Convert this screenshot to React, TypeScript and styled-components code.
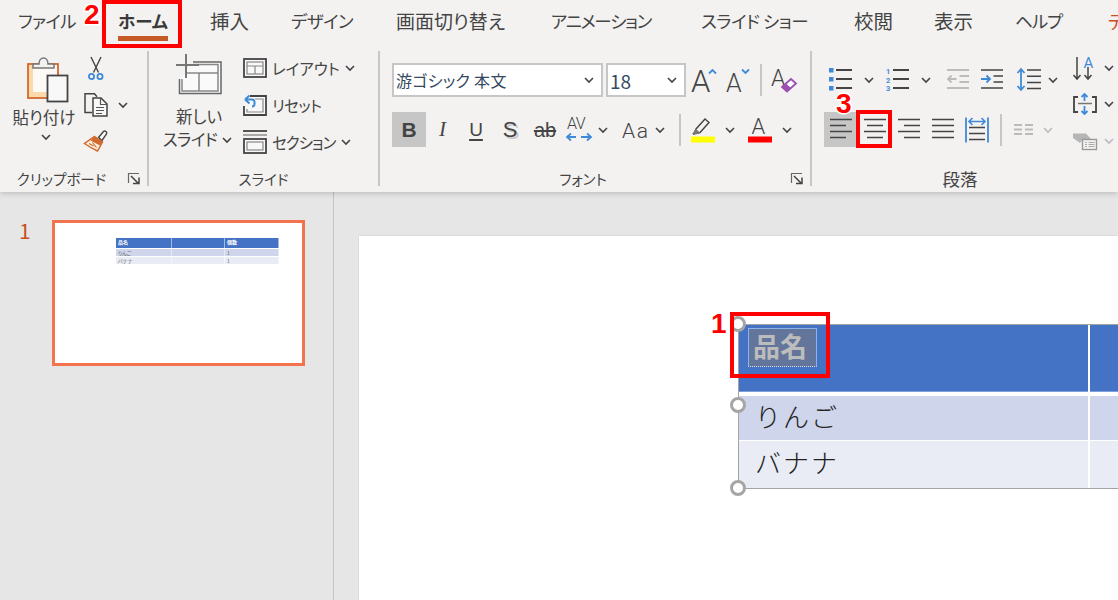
import React from "react";
import styled, { createGlobalStyle } from "styled-components";

const JP = `"Noto Sans CJK JP", "Noto Sans", sans-serif`;
const INK = "#444444";
const BLUE = "#3f8ad8";
const ORANGE = "#d2692f";

const Global = createGlobalStyle`
  html, body { margin: 0; padding: 0; background: #e6e6e6; }
  body { font-family: ${JP}; font-feature-settings: "palt"; overflow: hidden; }
`;

const Page = styled.div`
  position: relative;
  width: 1118px;
  height: 600px;
  overflow: hidden;
  display: flex;
  flex-direction: column;
  color: ${INK};
`;

/* ---------- ribbon ---------- */
const Ribbon = styled.header`
  position: relative;
  z-index: 2;
  flex: none;
  height: 192px;
  background: #f3f2f1;
  box-shadow: 0 2px 5px rgba(0, 0, 0, 0.16);
`;
const TabBar = styled.nav`
  display: flex;
  height: 48px;
  padding-left: 18px;
  white-space: nowrap;
  overflow: hidden;
`;
const Tab = styled.div<{ $w: number; $size?: number; $active?: boolean; $accent?: boolean; $ls?: number }>`
  flex: none;
  width: ${(p) => p.$w}px;
  font-size: ${(p) => p.$size ?? 17.5}px;
  line-height: 24px;
  padding-top: 9px;
  letter-spacing: ${(p) => p.$ls ?? 0}px;
  color: ${(p) => (p.$accent ? "#c8501e" : p.$active ? "#3a3a3a" : INK)};
  font-weight: ${(p) => (p.$active ? 700 : 400)};
`;
const TabText = styled.span<{ $active?: boolean }>`
  display: inline-block;
  padding-bottom: 3px;
  border-bottom: 5px solid ${(p) => (p.$active ? "#c55a27" : "transparent")};
`;
const Groups = styled.div`
  display: flex;
  height: 144px;
`;
const Group = styled.section<{ $w: number; $pad?: number }>`
  flex: none;
  width: ${(p) => p.$w}px;
  padding-left: ${(p) => p.$pad ?? 0}px;
  box-sizing: border-box;
  display: flex;
  flex-direction: column;
`;
const GroupBody = styled.div`
  flex: 1;
  min-height: 0;
  display: flex;
`;
const GroupFooter = styled.footer<{ $pad?: number; $w?: number }>`
  flex: none;
  height: 24px;
  width: ${(p) => (p.$w ? `${p.$w}px` : "auto")};
  margin: 0 0 1px -${(p) => p.$pad ?? 0}px;
  display: flex;
  align-items: center;
`;
const GroupLabel = styled.div<{ $size?: number }>`
  flex: 1;
  text-align: center;
  font-size: ${(p) => p.$size ?? 14.5}px;
  line-height: 24px;
  color: ${INK};
`;
const Launcher = styled.div`
  flex: none;
  width: 24px;
  display: flex;
  justify-content: flex-start;
  padding-left: 5px;
  box-sizing: border-box;
`;
const Divider = styled.div`
  flex: none;
  width: 2px;
  margin: 3px 0 6px;
  background: #c6c6c6;
`;

/* clipboard */
const PasteButton = styled.div`
  flex: none;
  width: 76px;
  margin-left: 6px;
  display: flex;
  flex-direction: column;
  align-items: center;
  padding-top: 9px;
`;
const PasteGraphic = styled.div`
  margin-left: 7px;
`;
const BigLabel = styled.div<{ $mt?: number; $ml?: number; $ls?: number }>`
  font-size: 16.5px;
  line-height: 23px;
  margin-top: ${(p) => p.$mt ?? 0}px;
  margin-left: ${(p) => p.$ml ?? 0}px;
  letter-spacing: ${(p) => p.$ls ?? 0}px;
  white-space: nowrap;
  display: flex;
  align-items: center;
  gap: 5px;
`;
const ChevronLine = styled.div`
  height: 16px;
  padding-left: 4px;
  display: flex;
  align-items: center;
`;
const ClipTools = styled.div`
  flex: none;
  width: 60px;
  display: flex;
  flex-direction: column;
  padding-top: 8px;
`;
const ClipTool = styled.div<{ $h: number; $pl: number }>`
  height: ${(p) => p.$h}px;
  display: flex;
  align-items: center;
  padding-left: ${(p) => p.$pl}px;
  gap: 10px;
`;

/* slides */
const NewSlide = styled.div`
  flex: none;
  width: 90px;
  display: flex;
  flex-direction: column;
  align-items: center;
  padding-top: 6px;
  margin-left: 5px;
`;
const SlideTools = styled.div`
  flex: none;
  display: flex;
  flex-direction: column;
  padding: 9px 0 0 0;
  margin-left: -1px;
`;
const SlideTool = styled.div<{ $h: number }>`
  height: ${(p) => p.$h}px;
  display: flex;
  align-items: center;
  font-size: 15.5px;
  white-space: nowrap;
`;
const SlideToolIcon = styled.div`
  width: 29px;
  flex: none;
`;
const SlideToolText = styled.span<{ $ls?: number }>`
  letter-spacing: ${(p) => p.$ls ?? 0}px;
`;
const ToolChevron = styled.div<{ $ml: number }>`
  margin-left: ${(p) => p.$ml}px;
  display: flex;
`;

/* font + paragraph */
const Stack = styled.div`
  flex: none;
  display: flex;
  flex-direction: column;
  padding-top: 15px;
  gap: 15px;
`;
const ToolRow = styled.div<{ $h: number }>`
  height: ${(p) => p.$h}px;
  display: flex;
  align-items: stretch;
`;
const Cell = styled.div<{ $w: number; $ml?: number; $on?: boolean }>`
  flex: none;
  width: ${(p) => p.$w}px;
  margin-left: ${(p) => p.$ml ?? 0}px;
  background: ${(p) => (p.$on ? "#c6c6c6" : "transparent")};
  display: flex;
  align-items: center;
  justify-content: center;
`;
const Select = styled.div<{ $w: number; $ml?: number; $size?: number; $ls?: number }>`
  flex: none;
  width: ${(p) => p.$w}px;
  margin-left: ${(p) => p.$ml ?? 0}px;
  box-sizing: border-box;
  background: #fff;
  border: 2px solid #c6c6c6;
  display: flex;
  align-items: center;
  justify-content: space-between;
  padding: 0 7px 0 2px;
  font-size: ${(p) => p.$size ?? 16}px;
  letter-spacing: ${(p) => p.$ls ?? 0}px;
  color: #34495e;
`;
const VRule = styled.div<{ $ml: number; $h: number }>`
  flex: none;
  width: 2px;
  height: ${(p) => p.$h}px;
  align-self: center;
  margin-left: ${(p) => p.$ml}px;
  background: #c6c6c6;
`;
const Glyph = styled.span<{ $size: number; $weight?: number; $serif?: boolean; $italic?: boolean; $under?: boolean; $strike?: boolean; $shadow?: boolean }>`
  font-family: ${(p) => (p.$serif ? `"Liberation Serif", serif` : `"Liberation Sans", sans-serif`)};
  font-size: ${(p) => p.$size}px;
  font-weight: ${(p) => p.$weight ?? 400};
  font-style: ${(p) => (p.$italic ? "italic" : "normal")};
  text-decoration: ${(p) => (p.$under ? "underline" : p.$strike ? "line-through" : "none")};
  text-decoration-thickness: 1.5px;
  text-underline-offset: 3px;
  text-shadow: ${(p) => (p.$shadow ? "2px 2px 0 #c9c9c9" : "none")};
  color: ${INK};
  line-height: 1;
  white-space: nowrap;
`;
const ParaLayout = styled.div`
  flex: 1;
  display: flex;
`;
const ParaSide = styled.div`
  flex: none;
  margin-left: 9px;
  display: flex;
  flex-direction: column;
  padding-top: 3px;
`;
const ParaSideItem = styled.div<{ $h: number }>`
  height: ${(p) => p.$h}px;
  display: flex;
  align-items: center;
  gap: 7px;
`;

/* ---------- work area ---------- */
const Work = styled.main`
  flex: 1;
  min-height: 0;
  display: flex;
  background: #e6e6e6;
`;
const ThumbPane = styled.aside`
  flex: none;
  width: 334px;
  box-sizing: border-box;
  border-right: 1px solid #c4c4c4;
  display: flex;
  padding: 28px 0 0 19px;
`;
const ThumbNumber = styled.div`
  width: 33px;
  font-size: 21px;
  line-height: 20px;
  color: #c8501e;
`;
const Thumb = styled.div`
  width: 253px;
  height: 146px;
  box-sizing: border-box;
  border: 3px solid #f4734f;
  background: #fff;
  padding: 15px 0 0 61px;
`;
const MiniTable = styled.div`
  width: 163px;
  display: grid;
  grid-template-columns: 56px 53px 54px;
  grid-template-rows: 10px 7px 7px;
  row-gap: 1px;
  font-size: 5px;
  line-height: 7px;
`;
const MiniCell = styled.div<{ $row: number }>`
  padding-left: 2px;
  overflow: hidden;
  white-space: nowrap;
  background: ${(p) => (p.$row === 0 ? "#4472c4" : p.$row === 1 ? "#cfd5ea" : "#e9ebf5")};
  color: ${(p) => (p.$row === 0 ? "#fff" : "#666")};
  font-weight: ${(p) => (p.$row === 0 ? 700 : 400)};
  border-right: 1px solid rgba(255, 255, 255, 0.5);
`;
const Stage = styled.div`
  flex: 1;
  min-width: 0;
  padding: 44px 0 0 25px;
  overflow: hidden;
`;
const Slide = styled.div`
  width: 800px;
  height: 400px;
  background: #fff;
  box-shadow: 0 0 1px rgba(0, 0, 0, 0.25);
  padding: 88px 0 0 379px;
  box-sizing: border-box;
`;
const TableWrap = styled.div`
  position: relative;
  width: 420px;
`;
const Table = styled.div`
  display: grid;
  grid-template-columns: 349px 71px;
  grid-template-rows: 66px 49px 48px;
  column-gap: 2px;
  border: 1px solid #a3a3a3;
  border-right: 0;
  background: #fff;
`;
const HeaderCell = styled.div`
  background: #4472c4;
  border-bottom: 1px solid #7e9fd8;
  margin-bottom: -1px;
  padding: 3px 0 0 9px;
`;
const Selected = styled.span`
  display: inline-block;
  width: 69px;
  height: 39px;
  box-sizing: border-box;
  border: 1px solid #8db4e6;
  border-bottom: 1px dotted #d5def0;
  background: #63759b;
  color: #bcbcbc;
  font-size: 27px;
  font-weight: 700;
  line-height: 34px;
  padding-left: 4px;
  white-space: nowrap;
`;
const BodyCell = styled.div<{ $alt?: boolean }>`
  background: ${(p) => (p.$alt ? "#e9ebf5" : "#cfd5ea")};
  margin-top: ${(p) => (p.$alt ? 1 : 5)}px;
  font-size: 26px;
  font-weight: 300;
  line-height: ${(p) => (p.$alt ? 42 : 40)}px;
  padding-left: 16px;
  letter-spacing: 2px;
  font-feature-settings: normal;
  color: #222;
`;
const Handle = styled.div<{ $top: number }>`
  position: absolute;
  left: -8px;
  top: ${(p) => p.$top}px;
  width: 16px;
  height: 16px;
  box-sizing: border-box;
  border: 3px solid #a5a5a5;
  border-radius: 50%;
  background: #fff;
`;

/* ---------- annotations ---------- */
const RedBox = styled.div<{ $x: number; $y: number; $w: number; $h: number }>`
  position: absolute;
  z-index: 5;
  left: ${(p) => p.$x}px;
  top: ${(p) => p.$y}px;
  width: ${(p) => p.$w}px;
  height: ${(p) => p.$h}px;
  box-sizing: border-box;
  border: 4px solid #ff0000;
`;
const Callout = styled.div<{ $x: number; $y: number }>`
  position: absolute;
  z-index: 6;
  left: ${(p) => p.$x}px;
  top: ${(p) => p.$y}px;
  font-family: "Liberation Sans", sans-serif;
  font-size: 28px;
  font-weight: 700;
  line-height: 30px;
  color: #ff0000;
  -webkit-text-stroke: 3px #fff;
  paint-order: stroke fill;
`;

/* ---------- icons ---------- */
const Ico = styled.svg`
  display: block;
  flex: none;
  overflow: visible;
`;
const Chevron = ({ c = INK }: { c?: string }) => (
  <Ico width="10" height="6" viewBox="0 0 10 6">
    <path d="M1 1l4 4 4-4" fill="none" stroke={c} strokeWidth="1.6" />
  </Ico>
);
const LauncherIcon = () => (
  <Ico width="12" height="12" viewBox="0 0 12 12">
    <path d="M.5 10V.5H11" fill="none" stroke="#666" strokeWidth="1.2" />
    <path d="M3 3l7 7M5 10.5h6v-6" fill="none" stroke="#444" strokeWidth="1.5" />
  </Ico>
);
const PasteIcon = () => (
  <Ico width="42" height="46" viewBox="0 0 42 46">
    <rect x="1" y="7" width="30" height="34" fill="#fbd9ac" stroke={ORANGE} strokeWidth="1.8" />
    <rect x="6" y="8" width="24" height="27" fill="#fdfaf6" />
    <path d="M6 11V7h6c0-8 9-8 9 0h6v4z" fill="#f3f2f1" stroke="#777" strokeWidth="1.5" />
    <rect x="20.5" y="18.500" width="20" height="26" fill="#f8f8f8" stroke="#444" strokeWidth="1.8" />
  </Ico>
);
const ScissorsIcon = () => (
  <Ico width="16" height="24" viewBox="0 0 16 24">
    <path d="M3 1l7.500 15.500M13 1L5.500 16.500" fill="none" stroke="#444" strokeWidth="1.400" />
    <circle cx="3.500" cy="20.500" r="2.600" fill="none" stroke={BLUE} strokeWidth="1.800" />
    <circle cx="12" cy="20.500" r="2.600" fill="none" stroke={BLUE} strokeWidth="1.800" />
  </Ico>
);
const CopyIcon = () => (
  <Ico width="24" height="24" viewBox="0 0 24 24">
    <path d="M8 19.500H1V.8h9.500l2.500 3" fill="none" stroke="#444" strokeWidth="1.500" />
    <path d="M9 5h8l6 6v12H9z" fill="#f8f8f8" stroke="#444" strokeWidth="1.500" />
    <path d="M16.500 5v6.500H23M12 14.500h8M12 17.500h8M12 20.500h6" fill="none" stroke="#555" strokeWidth="1.200" />
  </Ico>
);
const BrushIcon = () => (
  <Ico width="24" height="22" viewBox="0 0 24 22">
    <path d="M14.500 7.500l5-6c1.500-1.500 4 .5 3 2.500L18 10.500z" fill="#f8f8f8" stroke="#444" strokeWidth="1.400" />
    <path d="M10.500 6.500l8 5.500-5 9C9 19 4 16 .5 13.500z" fill="#fdf0df" stroke={ORANGE} strokeWidth="1.500" />
    <path d="M10.500 6.500l8 5.500-2.500 3.500-9.500-5z" fill={ORANGE} />
    <path d="M5 13.500l4.500 2.500M8.500 12.500l4 5" stroke={ORANGE} strokeWidth="1.200" />
  </Ico>
);
const NewSlideIcon = () => (
  <Ico width="46" height="42" viewBox="0 0 46 42">
    <path d="M17 8h28v31.500H3.500V25" fill="#fafafa" stroke="#666" strokeWidth="1.500" />
    <path d="M17 10.500h25v26.500H6V25M10 19h32M23 19v18" fill="none" stroke="#888" strokeWidth="1.500" />
    <path d="M10 0v24M0 11h23" fill="none" stroke="#777" strokeWidth="2" />
  </Ico>
);
const LayoutIcon = () => (
  <Ico width="24" height="20" viewBox="0 0 24 20">
    <rect x="1" y="1" width="22" height="18" fill="#f8f8f8" stroke="#444" strokeWidth="1.800" />
    <rect x="4" y="4" width="16" height="12" fill="none" stroke="#888" strokeWidth="1.200" />
    <path d="M4 8h16M12 8v8" stroke="#888" strokeWidth="1.200" />
  </Ico>
);
const ResetIcon = () => (
  <Ico width="24" height="22" viewBox="0 0 24 22">
    <path d="M7 2h16v19H1V12" fill="#f8f8f8" stroke="#444" strokeWidth="1.800" />
    <path d="M12 5h8v13H4v-3" fill="none" stroke="#888" strokeWidth="1.200" />
    <path d="M2 5.500l4.500-4M2 5.500l4.500 4M2 5.500h7c3.500 0 3.500 7 0 7" fill="none" stroke={BLUE} strokeWidth="2" />
  </Ico>
);
const SectionIcon = () => (
  <Ico width="24" height="24" viewBox="0 0 24 24">
    <path d="M0 1h24" stroke="#444" strokeWidth="1.800" />
    <path d="M0 5h24" stroke="#888" strokeWidth="1.400" />
    <rect x="1" y="9" width="22" height="14" fill="#f8f8f8" stroke="#444" strokeWidth="1.800" />
    <rect x="4" y="12" width="16" height="8" fill="none" stroke="#888" strokeWidth="1.200" />
  </Ico>
);
const GrowIcon = ({ down }: { down?: boolean }) => (
  <Ico width="26" height="30" viewBox="0 0 26 30">
    <text x="0" y="27" fontFamily="Roboto, sans-serif" fontWeight="300" fontSize={down ? 25 : 31} fill="#444">A</text>
    <path d={down ? "M16 4.500l3.500 3.500L23 4.500" : "M18 8.500l3.500-3.500L25 8.500"} fill="none" stroke={BLUE} strokeWidth="1.800" />
  </Ico>
);
const ClearIcon = () => (
  <Ico width="26" height="30" viewBox="0 0 26 30">
    <text x="0" y="21" fontFamily="Roboto, sans-serif" fontWeight="300" fontSize="23" fill="#444">A</text>
    <path d="M11 22l9-8 5 4.500-9 8z" fill="#fff" stroke="#9b4fb0" strokeWidth="1.800" />
    <path d="M11 22l4-3.500 5 4.500-4 3.500z" fill="#9b4fb0" />
  </Ico>
);
const SpacingIcon = () => (
  <Ico width="26" height="28" viewBox="0 0 26 28">
    <text x="1" y="13" fontFamily="Roboto, sans-serif" fontWeight="300" fontSize="16" letterSpacing="-.5" fill="#444">AV</text>
    <path d="M1 21h9M5 17.500L1 21l4 3.500M15 21h10M21 17.500l4 3.500-4 3.500" fill="none" stroke={BLUE} strokeWidth="1.800" />
  </Ico>
);
const CaseIcon = () => (
  <Ico width="26" height="22" viewBox="0 0 26 22">
    <text x="0" y="19" fontFamily="Roboto, sans-serif" fontWeight="300" letterSpacing="1.500" fontSize="21" fill="#444">Aa</text>
  </Ico>
);
const HighlightIcon = () => (
  <Ico width="24" height="26" viewBox="0 0 24 26">
    <path d="M3 17l2-5L14 2l4 3.500-9 10z" fill="#f3f2f1" stroke="#444" strokeWidth="1.400" />
    <path d="M1 17l4-5 4 3.500-2 1.500z" fill="#777" />
    <rect x="0" y="19.500" width="24" height="6" fill="#ffff00" />
  </Ico>
);
const FontColorIcon = () => (
  <Ico width="24" height="26" viewBox="0 0 24 26">
    <text x="3.500" y="17" fontFamily="Roboto, sans-serif" fontWeight="300" fontSize="22" fill="#444">A</text>
    <rect x="0" y="19.500" width="24" height="6" fill="#ff0000" />
  </Ico>
);
const BulletsIcon = () => (
  <Ico width="24" height="24" viewBox="0 0 24 24">
    <path d="M0 0h4.500v4.500H0zM0 9h4.500v4.500H0zM0 18h4.500v4.500H0z" fill={BLUE} />
    <path d="M7 2h16M7 11h16M7 20h16" stroke="#444" strokeWidth="1.800" />
  </Ico>
);
const NumberIcon = () => (
  <Ico width="24" height="24" viewBox="0 0 24 24">
    <text x="0" y="6" fontFamily="Roboto, sans-serif" fontWeight="700" fontSize="7.500" fill={BLUE}>1</text>
    <text x="0" y="15" fontFamily="Roboto, sans-serif" fontWeight="700" fontSize="7.500" fill={BLUE}>2</text>
    <text x="0" y="23" fontFamily="Roboto, sans-serif" fontWeight="700" fontSize="7.500" fill={BLUE}>3</text>
    <path d="M7 2h16M7 11h16M7 20h16" stroke="#444" strokeWidth="1.800" />
  </Ico>
);
const IndentIcon = ({ dec }: { dec?: boolean }) => {
  const line = dec ? "#aaa" : "#444";
  return (
    <Ico width="22" height="24" viewBox="0 0 22 24">
      <path d="M0 2h22M12.500 8h9.500M12.500 14h9.500M0 20h22" stroke={line} strokeWidth="1.500" />
      {dec ? (
        <path d="M9.500 11H1M4.500 7.500L1 11l3.500 3.500" fill="none" stroke="#bbb" strokeWidth="1.800" />
      ) : (
        <path d="M0 11h9M5.500 7.500L9 11l-3.500 3.500" fill="none" stroke={BLUE} strokeWidth="1.800" />
      )}
    </Ico>
  );
};
const LineSpacingIcon = () => (
  <Ico width="25" height="24" viewBox="0 0 25 24">
    <path d="M4 1v21M.5 5L4 1l3.500 4M.5 18L4 22l3.500-4" fill="none" stroke={BLUE} strokeWidth="1.800" />
    <path d="M10 2h14M10 8.300h14M10 14.500h14M10 20.500h14" stroke="#444" strokeWidth="1.500" />
  </Ico>
);
const AlignIcon = ({ kind }: { kind: "left" | "center" | "right" | "justify" }) => {
  const short = 16;
  const x1 = kind === "right" ? 22 - short : kind === "center" ? 3 : 0;
  const x2 = kind === "left" ? short : kind === "center" ? 19 : 22;
  const sx1 = kind === "justify" ? 0 : x1;
  const sx2 = kind === "justify" ? 22 : x2;
  return (
    <Ico width="22" height="22" viewBox="0 0 22 22">
      <path d={`M0 .5h22M${sx1} 6.500H${sx2}M0 12.500h22M${sx1} 18.500H${sx2}`} stroke="#444" strokeWidth="1.500" />
    </Ico>
  );
};
const DistributeIcon = () => (
  <Ico width="24" height="26" viewBox="0 0 24 26">
    <path d="M1 .5v25M23 .5v25" stroke={BLUE} strokeWidth="1.800" />
    <path d="M4 4.500h16M7.500 1L4 4.500 7.500 8M16.500 1L20 4.500 16.500 8" fill="none" stroke={BLUE} strokeWidth="1.600" />
    <path d="M4 10.500h16M4 16.500h16M4 22.500h16" stroke="#444" strokeWidth="1.500" />
  </Ico>
);
const ColumnsIcon = () => (
  <Ico width="19" height="12" viewBox="0 0 19 12">
    <path d="M0 1h8M11 1h8M0 5.500h8M11 5.500h8M0 10h8M11 10h8" stroke="#bbb" strokeWidth="1.800" />
  </Ico>
);
const TextDirIcon = () => (
  <Ico width="24" height="24" viewBox="0 0 24 24">
    <path d="M4 1v22M.5 19L4 23l3.500-4M15 11v12M11.500 19l3.500 4 3.500-4" fill="none" stroke="#444" strokeWidth="1.500" />
    <text x="10.500" y="11.500" fontFamily="Roboto, sans-serif" fontWeight="400" fontSize="15" fill={BLUE}>A</text>
  </Ico>
);
const TextAlignIcon = () => (
  <Ico width="24" height="22" viewBox="0 0 24 22">
    <path d="M5 4H1v15h4M19 4h4v15h-4" fill="none" stroke="#444" strokeWidth="1.800" />
    <path d="M5 10.500h14" stroke="#777" strokeWidth="1.500" />
    <path d="M11.500 1v7M8.500 4l3-3 3 3M11.500 13v8M8.500 18l3 3 3-3" fill="none" stroke={BLUE} strokeWidth="1.800" />
  </Ico>
);
const SmartArtIcon = () => (
  <Ico width="24" height="17" viewBox="0 0 24 17">
    <path d="M0 .5h13l5 5.500h-8l-3 4L0 5z" fill="#b5b5b5" />
    <rect x="9.500" y="6.500" width="14" height="10" fill="#f3f2f1" stroke="#999" strokeWidth="1.400" />
    <path d="M12 9.500h2M15.500 9.500h6M12 11.500h2M15.500 11.500h6M12 13.500h2M15.500 13.500h6" stroke="#aaa" />
  </Ico>
);

const tabs: { t: string; w: number; ls?: number; size?: number; active?: boolean; accent?: boolean }[] = [
  { t: "ファイル", w: 100, ls: -0.7 },
  { t: "ホーム", w: 92, active: true },
  { t: "挿入", w: 81, size: 19.5 },
  { t: "デザイン", w: 105, ls: -0.5 },
  { t: "画面切り替え", w: 155, size: 19 },
  { t: "アニメーション", w: 150, ls: -1.3 },
  { t: "スライド ショー", w: 153, ls: -0.4 },
  { t: "校閲", w: 80, size: 19.5 },
  { t: "表示", w: 81, size: 19.5 },
  { t: "ヘルプ", w: 93, ls: -1 },
  { t: "テ", w: 40, size: 18, accent: true },
];

export default function App() {
  return (
    <Page>
      <Global />
      <Ribbon>
        <TabBar>
          {tabs.map((x) => (
            <Tab key={x.t} $w={x.w} $ls={x.ls} $size={x.size} $active={x.active} $accent={x.accent}>
              <TabText $active={x.active}>{x.t}</TabText>
            </Tab>
          ))}
        </TabBar>
        <Groups>
          <Group $w={147}>
            <GroupBody>
              <PasteButton>
                <PasteGraphic><PasteIcon /></PasteGraphic>
                <BigLabel $mt={3}>貼り付け</BigLabel>
                <ChevronLine><Chevron /></ChevronLine>
              </PasteButton>
              <ClipTools>
                <ClipTool $h={24} $pl={6}><ScissorsIcon /></ClipTool>
                <ClipTool $h={50} $pl={2}><CopyIcon /><Chevron /></ClipTool>
                <ClipTool $h={22} $pl={2}><BrushIcon /></ClipTool>
              </ClipTools>
            </GroupBody>
            <GroupFooter>
              <GroupLabel>クリップボード</GroupLabel>
              <Launcher><LauncherIcon /></Launcher>
            </GroupFooter>
          </Group>
          <Divider />
          <Group $w={229}>
            <GroupBody>
              <NewSlide>
                <NewSlideIcon />
                <BigLabel $mt={9}>新しい</BigLabel>
                <BigLabel $ml={-3} $ls={-0.6}>スライド<Chevron /></BigLabel>
              </NewSlide>
              <SlideTools>
                <SlideTool $h={22}><SlideToolIcon><LayoutIcon /></SlideToolIcon><SlideToolText>レイアウト</SlideToolText><ToolChevron $ml={5}><Chevron /></ToolChevron></SlideTool>
                <SlideTool $h={52}><SlideToolIcon><ResetIcon /></SlideToolIcon><SlideToolText $ls={-0.5}>リセット</SlideToolText></SlideTool>
                <SlideTool $h={22}><SlideToolIcon><SectionIcon /></SlideToolIcon><SlideToolText $ls={-1}>セクション</SlideToolText><ToolChevron $ml={6}><Chevron /></ToolChevron></SlideTool>
              </SlideTools>
            </GroupBody>
            <GroupFooter>
              <GroupLabel>スライド</GroupLabel>
            </GroupFooter>
          </Group>
          <Divider />
          <Group $w={430} $pad={12}>
            <GroupBody>
              <Stack>
                <ToolRow $h={34}>
                  <Select $w={211} $ls={0.3}>游ゴシック 本文<Chevron /></Select>
                  <Select $w={80} $ml={3} $size={19}>18<Chevron /></Select>
                  <Cell $w={26} $ml={5}><GrowIcon /></Cell>
                  <Cell $w={26} $ml={9}><GrowIcon down /></Cell>
                  <VRule $ml={8} $h={32} />
                  <Cell $w={26} $ml={9}><ClearIcon /></Cell>
                </ToolRow>
                <ToolRow $h={35}>
                  <Cell $w={34} $on><Glyph $size={21} $weight={700}>B</Glyph></Cell>
                  <Cell $w={33}><Glyph $size={21} $serif $italic>I</Glyph></Cell>
                  <Cell $w={34}><Glyph $size={19} $under>U</Glyph></Cell>
                  <Cell $w={34}><Glyph $size={22} $shadow>S</Glyph></Cell>
                  <Cell $w={36}><Glyph $size={20} $strike>ab</Glyph></Cell>
                  <Cell $w={32}><SpacingIcon /></Cell>
                  <Cell $w={16}><Chevron /></Cell>
                  <Cell $w={26} $ml={11}><CaseIcon /></Cell>
                  <Cell $w={23}><Chevron /></Cell>
                  <VRule $ml={8} $h={32} />
                  <Cell $w={24} $ml={10}><HighlightIcon /></Cell>
                  <Cell $w={30}><Chevron /></Cell>
                  <Cell $w={24} $ml={3}><FontColorIcon /></Cell>
                  <Cell $w={30}><Chevron /></Cell>
                </ToolRow>
              </Stack>
            </GroupBody>
            <GroupFooter $pad={12}>
              <GroupLabel>フォント</GroupLabel>
              <Launcher><LauncherIcon /></Launcher>
            </GroupFooter>
          </Group>
          <Divider />
          <Group $w={320} $pad={12}>
            <GroupBody>
              <ParaLayout>
                <Stack>
                  <ToolRow $h={34}>
                    <Cell $w={24} $ml={5}><BulletsIcon /></Cell>
                    <Cell $w={31}><Chevron /></Cell>
                    <Cell $w={24} $ml={2}><NumberIcon /></Cell>
                    <Cell $w={31}><Chevron /></Cell>
                    <Cell $w={22} $ml={6}><IndentIcon dec /></Cell>
                    <Cell $w={22} $ml={12}><IndentIcon /></Cell>
                    <Cell $w={25} $ml={14}><LineSpacingIcon /></Cell>
                    <Cell $w={22}><Chevron /></Cell>
                  </ToolRow>
                  <ToolRow $h={35}>
                    <Cell $w={33} $on><AlignIcon kind="left" /></Cell>
                    <Cell $w={22} $ml={7}><AlignIcon kind="center" /></Cell>
                    <Cell $w={22} $ml={12}><AlignIcon kind="right" /></Cell>
                    <Cell $w={22} $ml={12}><AlignIcon kind="justify" /></Cell>
                    <Cell $w={24} $ml={11}><DistributeIcon /></Cell>
                    <VRule $ml={11} $h={32} />
                    <Cell $w={19} $ml={12}><ColumnsIcon /></Cell>
                    <Cell $w={30}><Chevron c="#bbb" /></Cell>
                  </ToolRow>
                </Stack>
                <ParaSide>
                  <ParaSideItem $h={34}><TextDirIcon /><Chevron /></ParaSideItem>
                  <ParaSideItem $h={38}><TextAlignIcon /><Chevron /></ParaSideItem>
                  <ParaSideItem $h={36}><SmartArtIcon /><Chevron c="#bbb" /></ParaSideItem>
                </ParaSide>
              </ParaLayout>
            </GroupBody>
            <GroupFooter $pad={12} $w={296}>
              <GroupLabel $size={17.5}>段落</GroupLabel>
            </GroupFooter>
          </Group>
        </Groups>
      </Ribbon>

      <Work>
        <ThumbPane>
          <ThumbNumber>1</ThumbNumber>
          <Thumb>
            <MiniTable>
              <MiniCell $row={0}>品名</MiniCell><MiniCell $row={0} /><MiniCell $row={0}>個数</MiniCell>
              <MiniCell $row={1}>りんご</MiniCell><MiniCell $row={1} /><MiniCell $row={1}>1</MiniCell>
              <MiniCell $row={2}>バナナ</MiniCell><MiniCell $row={2} /><MiniCell $row={2}>1</MiniCell>
            </MiniTable>
          </Thumb>
        </ThumbPane>
        <Stage>
          <Slide>
            <TableWrap>
              <Table>
                <HeaderCell><Selected>品名</Selected></HeaderCell>
                <HeaderCell />
                <BodyCell>りんご</BodyCell>
                <BodyCell />
                <BodyCell $alt>バナナ</BodyCell>
                <BodyCell $alt />
              </Table>
              <Handle $top={-8} />
              <Handle $top={73} />
              <Handle $top={156} />
            </TableWrap>
          </Slide>
        </Stage>
      </Work>

      <RedBox $x={102} $y={0} $w={80} $h={48} />
      <RedBox $x={856} $y={110} $w={36} $h={38} />
      <RedBox $x={730} $y={312} $w={100} $h={66} />
      <Callout $x={84} $y={0}>2</Callout>
      <Callout $x={836} $y={89}>3</Callout>
      <Callout $x={711} $y={309}>1</Callout>
    </Page>
  );
}
